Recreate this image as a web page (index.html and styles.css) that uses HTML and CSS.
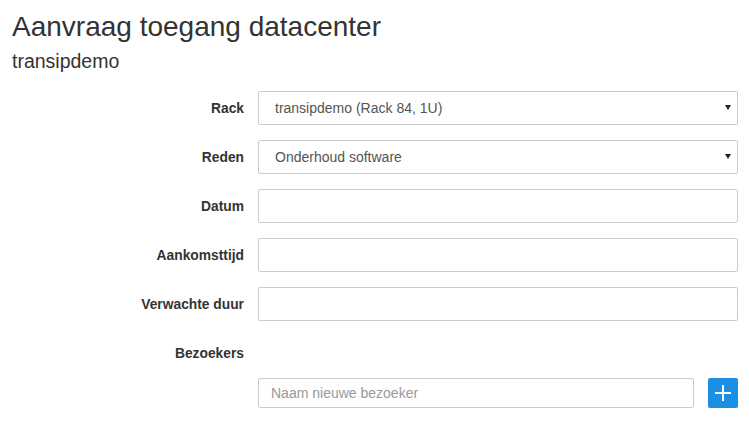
FILE: index.html
```html
<!DOCTYPE html>
<html lang="nl">
<head>
<meta charset="utf-8">
<title>Aanvraag toegang datacenter</title>
<link rel="stylesheet" href="styles.css">
</head>
<body>
<div class="page">
  <h1 class="title">Aanvraag toegang datacenter</h1>
  <h2 class="subtitle">transipdemo</h2>
  <form class="form">
    <div class="row">
      <label class="label" for="rack">Rack</label>
      <div class="select-wrap">
        <select id="rack" class="control select">
          <option>transipdemo (Rack 84, 1U)</option>
        </select>
      </div>
    </div>
    <div class="row">
      <label class="label" for="reden">Reden</label>
      <div class="select-wrap">
        <select id="reden" class="control select">
          <option>Onderhoud software</option>
        </select>
      </div>
    </div>
    <div class="row">
      <label class="label" for="datum">Datum</label>
      <input id="datum" class="control" type="text">
    </div>
    <div class="row">
      <label class="label" for="tijd">Aankomsttijd</label>
      <input id="tijd" class="control" type="text">
    </div>
    <div class="row">
      <label class="label" for="duur">Verwachte duur</label>
      <input id="duur" class="control" type="text">
    </div>
    <div class="row row-plain">
      <span class="label">Bezoekers</span>
      <span></span>
    </div>
    <div class="row row-visitor">
      <span></span>
      <div class="visitor">
        <input class="control control-sm" type="text" placeholder="Naam nieuwe bezoeker">
        <button type="button" class="add-btn" aria-label="Toevoegen">
          <svg width="16" height="16" viewBox="0 0 16 16"><path d="M8 0v16M0 8h16" stroke="#fff" stroke-width="2" fill="none"/></svg>
        </button>
      </div>
    </div>
  </form>
</div>
</body>
</html>
```
FILE: styles.css
```css
* { box-sizing: border-box; }
html, body {
  margin: 0;
  padding: 0;
  background: #fff;
}
body {
  font-family: "Liberation Sans", Arial, sans-serif;
  color: #333;
}
.page {
  padding: 12px 11px 0 12px;
}
.title {
  margin: 0;
  font-size: 28px;
  line-height: 1.1;
  font-weight: 400;
  color: #333;
}
.subtitle {
  margin: 8px 0 0;
  font-size: 19.5px;
  line-height: 1.1;
  font-weight: 400;
  color: #333;
}
.form {
  margin-top: 19px;
}
.row {
  display: grid;
  grid-template-columns: 232px 1fr;
  column-gap: 14px;
  align-items: center;
  margin-bottom: 15px;
}
.row-plain {
  height: 34px;
  margin-bottom: 8px;
}
.label {
  text-align: right;
  font-weight: 700;
  font-size: 13.8px;
  color: #333;
}
.control {
  display: block;
  width: 100%;
  height: 34px;
  padding: 0 12px;
  border: 1px solid #ccc;
  border-radius: 2px;
  background: #fff;
  font-family: "Liberation Sans", Arial, sans-serif;
  font-size: 14px;
  color: #555;
  outline: none;
}
.control::placeholder {
  color: #999;
}
.select-wrap {
  position: relative;
}
.select {
  appearance: none;
  -webkit-appearance: none;
  padding-left: 16px;
}
.select-wrap::after {
  content: "";
  position: absolute;
  right: 7px;
  top: 14px;
  width: 0;
  height: 0;
  border-left: 3px solid transparent;
  border-right: 3px solid transparent;
  border-top: 5px solid #222;
  pointer-events: none;
}
.visitor {
  display: flex;
  gap: 14px;
  align-items: center;
}
.control-sm {
  flex: 1;
  height: 30px;
}
.add-btn {
  flex: none;
  width: 30px;
  height: 30px;
  padding: 0;
  border: none;
  border-radius: 2px;
  background: #1a8fe3;
  display: flex;
  align-items: center;
  justify-content: center;
  cursor: pointer;
}
```
